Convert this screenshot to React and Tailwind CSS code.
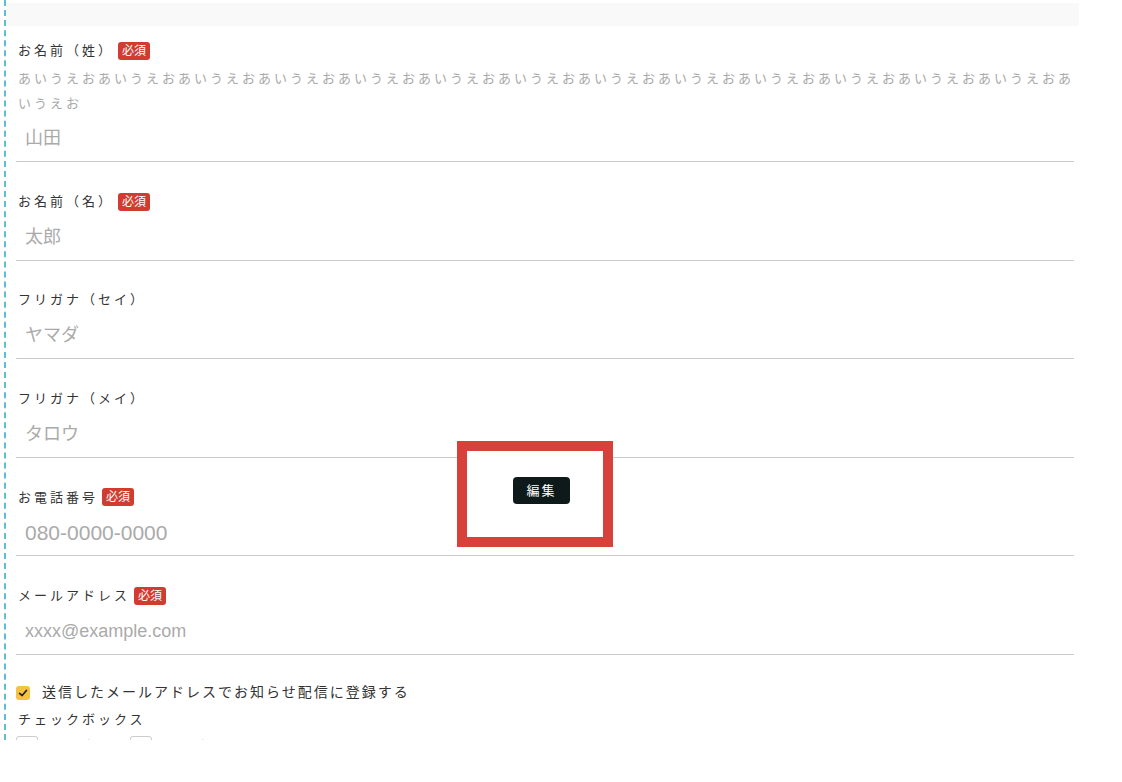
import React from 'react';

const font = { fontFamily: '"Liberation Sans", "Noto Sans CJK JP", sans-serif' };

const Badge = () => (
  <span className="ml-[4px] inline-flex h-[18px] items-center rounded-[3px] bg-[#d23c30] px-[4px] text-[12px] leading-none tracking-normal text-white">
    必須
  </span>
);

const Field = ({ label, required, placeholder, description, first, big }) => (
  <div className={first ? '' : 'mt-[29.6px]'}>
    <div className="flex h-[20px] items-center pl-[2px] text-[13px] tracking-[3px] text-[#333]">
      {label}
      {required && <Badge />}
    </div>
    {description ? (
      <p className="mt-[5px] pl-[2px] text-[13px] leading-[25px] tracking-[3px] text-[#a9a9a9]">
        {description[0]}
        <br />
        {description[1]}
      </p>
    ) : (
      <div className="h-[3px]" />
    )}
    <input
      readOnly
      placeholder={placeholder}
      className={`block h-[46px] w-full border-b border-[#cccccc] bg-transparent pl-[9px] outline-none placeholder:text-[#aaa] ${big ? 'text-[21px]' : 'text-[18px]'}`}
      style={font}
    />
  </div>
);

export default function App() {
  const line1 = 'あいうえお'.repeat(13) + 'あ';
  const line2 = 'いうえお';

  return (
    <div className="min-h-screen bg-white" style={font}>
      <div className="relative ml-[4px] h-[740px] w-[1080px] overflow-hidden border-l-2 border-dashed border-[#5bc0d3]">
        {/* top band */}
        <div className="mt-[3px] h-[23px] w-[1073px] bg-[#f9f9f9]" />

        {/* form */}
        <div className="ml-[10px] w-[1058px] pt-[15px]">
          <Field first label="お名前（姓）" required placeholder="山田" description={[line1, line2]} />
          <Field label="お名前（名）" required placeholder="太郎" />
          <Field label="フリガナ（セイ）" placeholder="ヤマダ" />
          <Field label="フリガナ（メイ）" placeholder="タロウ" />
          <Field label="お電話番号" required placeholder="080-0000-0000" big />
          <Field label="メールアドレス" required placeholder="xxxx@example.com" />

          {/* newsletter checkbox */}
          <label className="mt-[28px] flex h-[20px] items-center">
            <span className="flex h-[14px] w-[14px] items-center justify-center rounded-[3px] bg-[#f4c342]">
              <svg viewBox="0 0 14 14" className="h-[12px] w-[12px]">
                <polyline points="3,7.5 6,10 11,4" fill="none" stroke="#222" strokeWidth="2" strokeLinecap="round" strokeLinejoin="round" />
              </svg>
            </span>
            <span className="ml-[12px] text-[14px] tracking-[2px] text-[#333]">
              送信したメールアドレスでお知らせ配信に登録する
            </span>
          </label>

          <div className="mt-[7px] flex h-[20px] items-center pl-[2px] text-[13px] tracking-[3px] text-[#333]">
            チェックボックス
          </div>

          <div className="mt-[6px] flex items-center">
            <span className="h-[22px] w-[22px] rounded-[3px] border border-[#ccc]" />
            <span className="ml-[10px] w-[82px] text-[13px] tracking-[3px] text-[#333]">選択肢１</span>
            <span className="h-[22px] w-[22px] rounded-[3px] border border-[#ccc]" />
            <span className="ml-[10px] text-[13px] tracking-[3px] text-[#333]">選択肢２</span>
          </div>
        </div>

        {/* selection overlay */}
        <div className="absolute left-[451px] top-[441px] h-[106px] w-[156px] border-[10px] border-[#d8413a] bg-white pl-[46px] pt-[26px]">
          <button className="flex h-[27px] w-[57px] items-center justify-center rounded-[4px] bg-[#0e1a1a] text-[13px] tracking-[2px] text-white">
            編集
          </button>
        </div>
      </div>
    </div>
  );
}
